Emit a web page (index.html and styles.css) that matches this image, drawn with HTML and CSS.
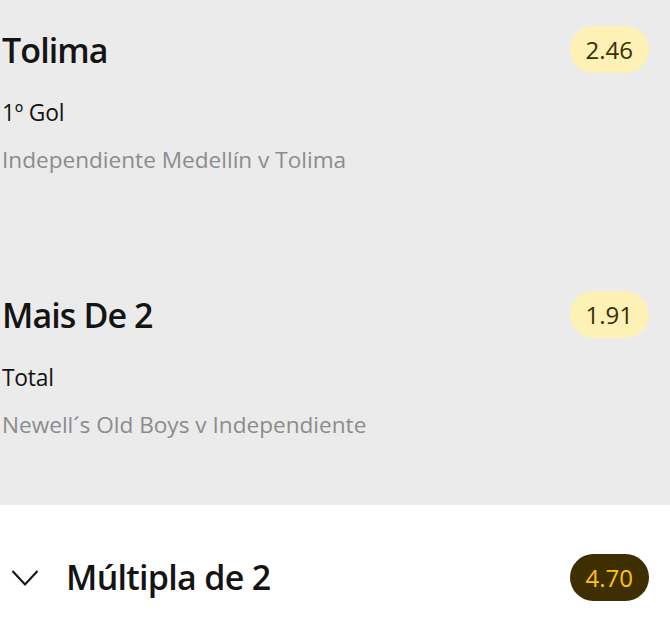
FILE: index.html
```html
<!DOCTYPE html>
<html lang="pt">
<head>
<meta charset="utf-8">
<link rel="stylesheet" href="styles.css">
</head>
<body>
<div class="page">
  <div class="selections">
    <div class="sel">
      <div class="sel-head">
        <div class="sel-title">Tolima</div>
        <div class="odds">2.46</div>
      </div>
      <div class="sel-market">1º Gol</div>
      <div class="sel-event">Independiente Medellín v Tolima</div>
    </div>
    <div class="sel">
      <div class="sel-head">
        <div class="sel-title">Mais De 2</div>
        <div class="odds">1.91</div>
      </div>
      <div class="sel-market">Total</div>
      <div class="sel-event">Newell´s Old Boys v Independiente</div>
    </div>
  </div>
  <div class="multi">
    <svg class="chev" width="28" height="18" viewBox="0 0 28 18"><path d="M1.5 2 L14 15.5 L26.5 2" fill="none" stroke="#1a1a1a" stroke-width="2.2"/></svg>
    <div class="multi-title">Múltipla de 2</div>
    <div class="odds odds-dark">4.70</div>
  </div>
</div>
</body>
</html>
```
FILE: styles.css
```css
* { box-sizing: border-box; }
html, body { margin: 0; padding: 0; }
body {
  font-family: "Open Sans", "Noto Sans", sans-serif;
  background: #ffffff;
  color: #141414;
  width: 670px;
  height: 626px;
  overflow: hidden;
}
.page { width: 670px; }
.selections {
  background: #ebebeb;
  margin-top: -25px;
}
.sel {
  height: 265px;
  padding: 51px 21px 0 2px;
}
.sel-head {
  display: flex;
  align-items: center;
  justify-content: space-between;
  height: 47px;
}
.sel-title {
  font-size: 34px;
  font-weight: 600;
  letter-spacing: -0.9px;
}
.odds {
  height: 47px;
  min-width: 78px;
  padding: 0 16px;
  border-radius: 24px;
  background: #fdf1b6;
  color: #3a2f07;
  font-size: 24px;
  display: flex;
  align-items: center;
  justify-content: center;
}
.odds-dark {
  background: #3d2f00;
  color: #ffc20e;
}
.sel-market {
  margin-top: 25px;
  font-size: 22.8px;
  line-height: 30px;
  letter-spacing: -0.2px;
  color: #141414;
}
.sel-event {
  margin-top: 17px;
  font-size: 22.6px;
  line-height: 30px;
  color: #8c8c8c;
}
.multi {
  display: flex;
  padding: 49px 21px 0 11px;
  height: 121px;
  align-items: flex-start;
}
.chev { margin-top: 15px; }
.multi-title {
  margin-left: 27px;
  font-size: 34px;
  font-weight: 600;
  letter-spacing: -0.7px;
  line-height: 47px;
  flex: 1;
}
```
